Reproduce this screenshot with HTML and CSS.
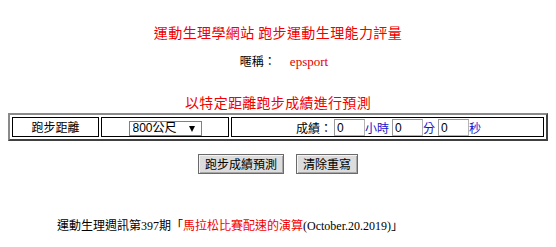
FILE: index.html
```html
<!DOCTYPE html>
<html lang="zh-Hant">
<head>
<meta charset="utf-8">
<title>跑步運動生理能力評量</title>
<link rel="stylesheet" href="styles.css">
</head>
<body>
<div class="page">
  <h1 class="title">運動生理學網站 跑步運動生理能力評量</h1>
  <p class="nick"><span class="nick-label">暱稱：</span><span class="nick-name">epsport</span></p>
  <h2 class="subtitle">以特定距離跑步成績進行預測</h2>
  <table class="form-table">
    <tr>
      <td class="c-label">跑步距離</td>
      <td class="c-select">
        <span class="select-wrap">
          <select class="dist">
            <option>800公尺</option>
            <option>1500公尺</option>
            <option>3000公尺</option>
            <option>5000公尺</option>
            <option>10000公尺</option>
          </select>
        </span>
      </td>
      <td class="c-time">
        <span class="time-row">
          <span class="t-label">成績：</span>
          <input class="t-in" type="text" value="0"><span class="unit">小時</span>
          <input class="t-in" type="text" value="0"><span class="unit">分</span>
          <input class="t-in" type="text" value="0"><span class="unit">秒</span>
        </span>
      </td>
    </tr>
  </table>
  <div class="buttons">
    <button class="btn" type="button">跑步成績預測</button>
    <button class="btn" type="button">清除重寫</button>
  </div>
  <p class="news">運動生理週訊第397期「<span class="news-link">馬拉松比賽配速的演算</span>(October.20.2019)」</p>
</div>
</body>
</html>
```
FILE: styles.css
```css
html, body {
  margin: 0;
  padding: 0;
  background: #ffffff;
}
body {
  font-family: "Liberation Serif", "Noto Sans CJK TC", serif;
  color: #000000;
}
.page {
  padding: 0 8px;
}
.title {
  margin: 22px 0 0;
  font-size: 14px;
  line-height: 20px;
  letter-spacing: 0.4px;
  font-weight: normal;
  color: #f00000;
  text-align: center;
  font-family: "Noto Sans CJK TC", sans-serif;
}
.nick {
  margin: 11px 0 0;
  padding-left: 12px;
  font-size: 12px;
  line-height: 16px;
  text-align: center;
}
.nick-label {
  font-family: "Noto Sans CJK TC", sans-serif;
  margin-right: 14px;
}
.nick-name {
  color: #e00000;
  font-family: "Liberation Serif", serif;
  font-size: 13px;
}
.subtitle {
  margin: 24px 0 0;
  font-size: 14px;
  line-height: 16px;
  letter-spacing: 0.3px;
  font-weight: normal;
  color: #f00000;
  text-align: center;
  font-family: "Noto Sans CJK TC", sans-serif;
}
.form-table {
  margin-top: 3px;
  width: 100%;
  table-layout: fixed;
  border-collapse: separate;
  border-spacing: 2px;
  border: 2px solid;
  border-color: #8a8a8a #404040 #404040 #8a8a8a;
  font-family: "Noto Sans CJK TC", sans-serif;
  font-size: 12px;
}
.form-table td {
  border: 1px solid #000000;
  padding: 0;
  height: 17px;
  text-align: center;
  vertical-align: middle;
  line-height: 16px;
}
.c-label {
  width: 85px;
}
.c-select {
  width: 126px;
}
.select-wrap {
  position: relative;
  display: inline-block;
  vertical-align: middle;
}
.select-wrap::after {
  content: "";
  position: absolute;
  right: 7px;
  top: 5px;
  border-left: 3px solid transparent;
  border-right: 3px solid transparent;
  border-top: 6px solid #000000;
  pointer-events: none;
}
.dist {
  -webkit-appearance: none;
  appearance: none;
  width: 73px;
  height: 15px;
  margin: 0;
  padding: 0 0 0 3px;
  border: 1px solid #808080;
  border-radius: 0;
  background: #ffffff;
  font-family: "Liberation Sans", "Noto Sans CJK TC", sans-serif;
  font-size: 12px;
  line-height: 13px;
  color: #000000;
  display: block;
}
.time-row {
  display: inline-flex;
  align-items: center;
  vertical-align: middle;
  padding-left: 2px;
}
.t-label {
  margin-right: 2px;
}
.t-in {
  width: 31px;
  height: 17px;
  box-sizing: border-box;
  margin: 0;
  padding: 0 2px;
  border: 1px solid #b4b4b4;
  border-top-color: #9a9a9a;
  border-left-color: #9a9a9a;
  font-family: "Liberation Sans", sans-serif;
  font-size: 12px;
  color: #000000;
  background: #ffffff;
}
.unit {
  color: #1414cc;
  margin-right: 3px;
}
.unit:last-child {
  margin-right: 0;
}
.buttons {
  margin-top: 13px;
  display: flex;
  justify-content: center;
  gap: 12px;
}
.btn {
  height: 20px;
  margin: 0;
  padding: 0 6px;
  border: 1px solid #6a6a6a;
  border-radius: 0;
  background: #dcdcdc;
  box-shadow: inset 1px 1px 0 #f4f4f4, inset -1px -1px 0 #a8a8a8;
  font-family: "Noto Sans CJK TC", sans-serif;
  font-size: 12px;
  line-height: 16px;
  color: #000000;
}
.news {
  margin: 44px 0 0;
  padding-left: 49px;
  font-size: 12px;
  line-height: 16px;
}
.news-link {
  color: #f00000;
}
```
